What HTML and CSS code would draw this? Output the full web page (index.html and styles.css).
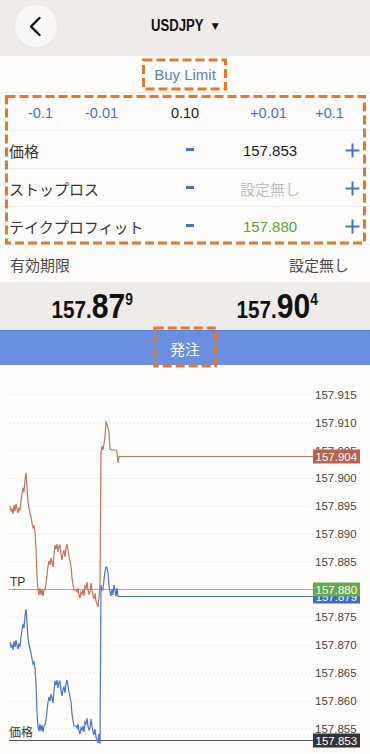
FILE: index.html
```html
<!DOCTYPE html>
<html lang="ja">
<head>
<meta charset="utf-8">
<title>USDJPY</title>
<link rel="stylesheet" href="styles.css">
</head>
<body>
<header class="top">
  <div class="back">
    <svg width="42" height="42" viewBox="15 5 42 42"><path d="M39.5 18 L31 26.5 L39.5 35" fill="none" stroke="#111" stroke-width="2.4" stroke-linecap="round" stroke-linejoin="round"/></svg>
  </div>
  <div class="title"><span class="t">USDJPY</span><span class="caret">▼</span></div>
  <div></div>
</header>

<div class="type">Buy Limit</div>

<div class="steps">
  <span>-0.1</span><span>-0.01</span><span class="cur">0.10</span><span>+0.01</span><span>+0.1</span>
</div>

<div class="row">
  <span class="label">価格</span><span class="minus"></span><span class="val">157.853</span>
  <span class="plus"><svg width="15" height="15" viewBox="0 0 15 15"><path d="M7.5 0.5V14.5M0.5 7.5H14.5" stroke="#4a70d0" stroke-width="2"/></svg></span>
</div>
<div class="row">
  <span class="label">ストップロス</span><span class="minus"></span><span class="val none">設定無し</span>
  <span class="plus"><svg width="15" height="15" viewBox="0 0 15 15"><path d="M7.5 0.5V14.5M0.5 7.5H14.5" stroke="#4a70d0" stroke-width="2"/></svg></span>
</div>
<div class="row">
  <span class="label">テイクプロフィット</span><span class="minus"></span><span class="val tp">157.880</span>
  <span class="plus"><svg width="15" height="15" viewBox="0 0 15 15"><path d="M7.5 0.5V14.5M0.5 7.5H14.5" stroke="#4a70d0" stroke-width="2"/></svg></span>
</div>

<div class="expiry"><span>有効期限</span><span>設定無し</span></div>

<div class="prices">
  <div class="price"><span class="pw"><span class="ps">157.</span>87<span class="pu">9</span></span></div>
  <div class="price"><span class="pw"><span class="ps">157.</span>90<span class="pu">4</span></span></div>
</div>

<div class="order">発注</div>

<svg class="chart" width="370" height="389" viewBox="0 365 370 389">
  <defs>
    <path id="pre" fill="none" d="M10 506 L11 511 L12 509 L13 514 L14 505 L15 511 L16 504 L17 509 L18 513 L19 508 L20 510 L21 501 L22 494 L23 488 L24 492 L25 480 L26 473 L27 486 L28 502 L29 509 L30 513 L31 517 L32 523 L33 528 L34 526 L35 532 L36 548 L37 576 L38 591 L39 595 L40 588 L41 595 L42 589 L43 596 L44 590 L45 589 L46 584 L47 575 L48 566 L49 561 L50 565 L51 558 L52 562 L53 567 L54 555 L55 545 L56 549 L57 544 L58 552 L59 546 L60 545 L61 555 L62 560 L63 553 L64 551 L65 557 L66 548 L67 544 L68 550 L69 556 L70 561 L71 566 L72 578 L73 585 L74 590 L75 590 L76 590 L77 592 L78 588 L79 595 L80 598 L81 592 L82 594 L83 590 L84 596 L85 586 L86 588 L87 582 L88 590 L89 594 L90 592 L91 583 L92 590 L93 596 L94 599 L95 593 L96 601 L97 604 L98 607 L99 598"/>
  </defs>
  <g class="grid">
    <line x1="9" y1="395" x2="311" y2="395"/>
    <line x1="9" y1="422.8" x2="311" y2="422.8"/>
    <line x1="9" y1="450.6" x2="311" y2="450.6"/>
    <line x1="9" y1="478.4" x2="311" y2="478.4"/>
    <line x1="9" y1="506.2" x2="311" y2="506.2"/>
    <line x1="9" y1="534" x2="311" y2="534"/>
    <line x1="9" y1="561.8" x2="311" y2="561.8"/>
    <line x1="9" y1="617.4" x2="311" y2="617.4"/>
    <line x1="9" y1="645.2" x2="311" y2="645.2"/>
    <line x1="9" y1="673" x2="311" y2="673"/>
    <line x1="9" y1="700.8" x2="311" y2="700.8"/>
    <line x1="9" y1="728.6" x2="311" y2="728.6"/>
  </g>
  <g class="axis">
    <text x="315" y="399">157.915</text>
    <text x="315" y="426.8">157.910</text>
    <text x="315" y="454.6">157.905</text>
    <text x="315" y="482.4">157.900</text>
    <text x="315" y="510.2">157.895</text>
    <text x="315" y="538">157.890</text>
    <text x="315" y="565.8">157.885</text>
    <text x="315" y="621.4">157.875</text>
    <text x="315" y="649.2">157.870</text>
    <text x="315" y="677">157.865</text>
    <text x="315" y="704.8">157.860</text>
    <text x="315" y="732.6">157.855</text>
  </g>

  <line x1="9" y1="589.5" x2="313" y2="589.5" class="tpline"/>
  <text x="10" y="586" class="lbl">TP</text>
  <line x1="9" y1="740.5" x2="313" y2="740.5" class="pxline"/>
  <text x="9" y="737" class="lbl">価格</text>

  <use href="#pre" class="ask"/>
  <path class="ask" d="M99 598 L100 585 L101 452 L102 446 L103 450 L104 444 L105 437 L106 422 L107 424 L108 428 L109 433 L110 449 L112 450 L116 450 L117 452 L118 463 L119 456.5 L313 456.5"/>
  <use href="#pre" class="bid" transform="translate(0 136)"/>
  <path class="bid" d="M99 734 L100 744 L101 585 L102 590 L103 589 L104 580 L105 571 L106 567 L107 568 L108 573 L109 586 L110 592 L111 596 L112 589 L113 595 L114 585 L115 591 L116 596.5 L117 588 L118 596.5 L313 596.5"/>

  <rect x="313" y="449.5" width="47" height="14" fill="#b8634d"/>
  <text x="315.5" y="461" class="tag">157.904</text>
  <rect x="313" y="589.5" width="47" height="14" fill="#3f6bc8"/>
  <text x="315.5" y="601" class="tag">157.879</text>
  <rect x="313" y="582.5" width="47" height="14" fill="#69a84b"/>
  <text x="315.5" y="594" class="tag">157.880</text>
  <rect x="313" y="733.5" width="47" height="14" fill="#333"/>
  <text x="315.5" y="745" class="tag">157.853</text>
</svg>

<svg class="marks" width="370" height="754" viewBox="0 0 370 754">
  <rect x="143.5" y="60" width="82" height="29"/>
  <rect x="6.5" y="96.5" width="358" height="146.5"/>
  <rect x="154.7" y="328" width="61" height="38"/>
</svg>
</body>
</html>
```

FILE: styles.css
```css
* {
  box-sizing: border-box;
  margin: 0;
  padding: 0;
}

body {
  margin: 0;
  width: 370px;
  height: 754px;
  overflow: hidden;
  position: relative;
  background: #fffdfc;
  color: #222;
  font-family: "Liberation Sans", "Noto Sans CJK JP", sans-serif;
}

.top {
  height: 56px;
  padding-bottom: 4px;
  background: #eeebe9;
  display: grid;
  grid-template-columns: 1fr auto 1fr;
  align-items: center;
}

.back {
  width: 42px;
  height: 42px;
  margin-left: 15px;
  border-radius: 50%;
  background: #faf8f7;
  display: flex;
}

.title {
  display: flex;
  align-items: center;
  font-weight: bold;
  font-size: 16px;
  color: #111;
}

.title .t {
  display: inline-block;
  transform: scaleX(0.82);
  transform-origin: left center;
  margin-right: -11.5px;
}

.caret {
  font-size: 9px;
  margin-left: 8px;
  font-family: "DejaVu Sans", sans-serif;
}

.type {
  height: 37px;
  border-bottom: 1px solid #f0eeed;
  display: flex;
  align-items: center;
  justify-content: center;
  font-size: 15px;
  color: #5a7dc9;
}

.steps {
  height: 38px;
  padding: 2px 10px 0;
  display: grid;
  grid-template-columns: 61px 61px 1fr 61px 61px;
  align-items: center;
  text-align: center;
  font-size: 14.5px;
  color: #4a6fc8;
  border-bottom: 1px solid #f0eeed;
}

.steps .cur {
  color: #1a1a1a;
}

.row {
  height: 38px;
  padding: 2px 3px 0 9px;
  display: grid;
  grid-template-columns: 1fr 26px 134px 30px;
  align-items: center;
  font-size: 15px;
  color: #333;
  border-bottom: 1px solid #f0eeed;
}

.minus {
  justify-self: center;
  width: 8px;
  height: 3px;
  margin-top: -3px;
  background: #4a70d0;
}

.val {
  text-align: center;
  color: #1a1a1a;
}

.val.none {
  color: #bdbdbd;
}

.val.tp {
  color: #5b9e3d;
}

.plus {
  justify-self: center;
  display: flex;
}

.expiry {
  height: 37px;
  padding: 2px 21px 0 10px;
  display: flex;
  justify-content: space-between;
  align-items: center;
  font-size: 15px;
  color: #4a4a4a;
}

.prices {
  height: 48px;
  background: #eeebe9;
  display: flex;
}

.price {
  flex: 1;
  text-align: center;
  font-size: 35px;
  line-height: 48px;
}

.pw {
  display: inline-block;
  transform: scaleX(0.86);
  font-weight: bold;
  color: #111;
}

.ps {
  font-size: 24px;
  line-height: 1;
}

.pu {
  font-size: 16px;
  line-height: 1;
  vertical-align: 13px;
}

.order {
  height: 35px;
  background: #6a8ee0;
  border-top: 1px solid #5a7ed2;
  color: #fff;
  font-size: 15px;
  display: flex;
  align-items: center;
  justify-content: center;
}

.chart {
  display: block;
  background: #fffefd;
}

.grid line {
  stroke: #f2e7e6;
  stroke-width: 1;
  stroke-dasharray: 2 2;
}

.axis text {
  font-size: 11.5px;
  fill: #444;
  font-family: "Liberation Sans", sans-serif;
}

.lbl {
  font-size: 12px;
  fill: #333;
  font-family: "Liberation Sans", "Noto Sans CJK JP", sans-serif;
}

.tpline {
  stroke: #7cc868;
  stroke-width: 1;
}

.pxline {
  stroke: #555;
  stroke-width: 1;
}

.ask {
  fill: none;
  stroke: #c2735d;
  stroke-width: 1.2;
}

.bid {
  fill: none;
  stroke: #4a72d0;
  stroke-width: 1.2;
}

.tag {
  font-size: 11.5px;
  fill: #fff;
  font-family: "Liberation Sans", sans-serif;
}

.marks {
  position: absolute;
  left: 0;
  top: 0;
  pointer-events: none;
}

.marks rect {
  fill: none;
  stroke: #e8772e;
  stroke-width: 3;
  stroke-dasharray: 9 4;
}
```
